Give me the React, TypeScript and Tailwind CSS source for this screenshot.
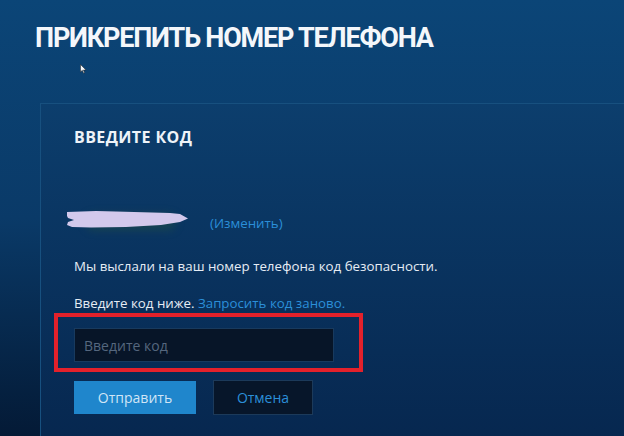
import React from "react";

export default function App() {
  return (
    <div
      className="relative w-[624px] h-[436px] overflow-hidden bg-gradient-to-b from-[#0b4577] via-[#0a3a68] to-[#041a36]"
      style={{ fontFamily: '"Open Sans", "Liberation Sans", sans-serif' }}
    >
      <svg className="absolute left-[80px] top-[64px]" width="7" height="10" viewBox="0 0 7 10">
        <path d="M0.5 0.5 L0.5 8 L2.3 6.3 L3.6 9.2 L4.6 8.8 L3.4 6 L6 6 Z" fill="#f5f7fa" stroke="#222" strokeWidth="0.5" />
      </svg>
      <h1
        className="pl-[35px] pt-[21px] text-[27px] leading-[34px] font-bold text-[#f4f7fb] tracking-[-1.2px]"
        style={{ fontFamily: 'Roboto, "Liberation Sans", sans-serif' }}
      >
        ПРИКРЕПИТЬ НОМЕР ТЕЛЕФОНА
      </h1>
      <div className="ml-[40px] mt-[48px] h-[400px] border-t border-l border-[#17507f] bg-gradient-to-b from-[#0c3e6d] to-[#06234a] pl-[33px] pt-[23px]">
        <h2 className="text-[16px] leading-[20px] font-bold text-[#eef3f8] tracking-[0.4px]">ВВЕДИТЕ КОД</h2>
        <div className="mt-[65px] flex items-center h-[20px]">
          <div className="relative w-[125px] h-[18px] -ml-[8px]">
            <div className="absolute left-[20px] top-[1px] w-[90px] h-[16px] rounded-full bg-[#2c5a3a]/40 blur-[4px]" />
            <svg className="absolute left-0 top-[-3px]" width="125" height="20" viewBox="0 0 125 20">
              <path
                d="M1 2 L30 1 L50 1.5 L104 3 L114 4 L122 8.5 L114 12 L95 15 L60 17 L25 17.5 L6 17 L1 15 L2 12 L8 10 L2 8 L1 6 Z"
                fill="#d3c9ec"
              />
            </svg>
          </div>
          <a className="ml-[19px] mt-[4px] text-[13.3px] text-[#2b8fd9]">(Изменить)</a>
        </div>
        <p className="mt-[24px] text-[13.3px] leading-[20px] text-[#e6edf5]">
          Мы выслали на ваш номер телефона код безопасности.
        </p>
        <p className="mt-[17px] text-[13.3px] leading-[20px] text-[#e6edf5]">
          Введите код ниже. <span className="text-[#2b8fd9]">Запросить код заново.</span>
        </p>
        <div className="relative mt-[15px] w-[260px]">
          <div className="absolute left-[-20px] top-[-15px] w-[309px] h-[59px] border-[4px] border-[#e3212b]" />
          <div className="relative h-[34px] w-[260px] bg-[#071528] border border-[#183a5e] flex items-center pl-[9px] text-[14px] text-[#55677e]">
            Введите код
          </div>
        </div>
        <div className="mt-[18px] flex items-center gap-[17px]">
          <button className="w-[122px] h-[33px] bg-[#1f86cc] text-[14px] text-[#d0e5f6]">Отправить</button>
          <button className="w-[100px] h-[35px] bg-[#07162a] border border-[#1c3a5a] text-[14px] text-[#2b8fd9]">Отмена</button>
        </div>
      </div>
    </div>
  );
}
